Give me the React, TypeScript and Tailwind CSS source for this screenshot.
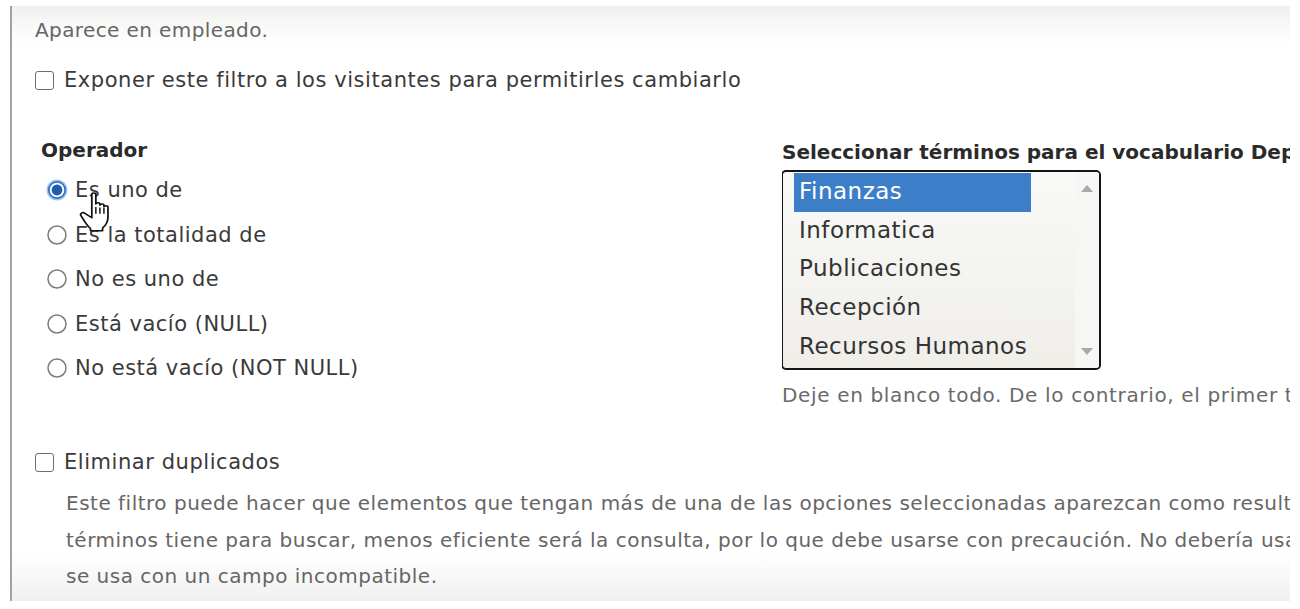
import type { ReactNode } from "react"

const font = { fontFamily: '"DejaVu Sans", Verdana, sans-serif' }

const operators = [
  "Es uno de",
  "Es la totalidad de",
  "No es uno de",
  "Está vacío (NULL)",
  "No está vacío (NOT NULL)",
]

const terms = ["Finanzas", "Informatica", "Publicaciones", "Recepción", "Recursos Humanos"]

const Checkbox = () => (
  <span className="inline-block h-[19px] w-[19px] shrink-0 rounded-[3px] border-[1.5px] border-[#6f6f6f] bg-white" />
)

const Radio = ({ checked }: { checked?: boolean }) =>
  checked ? (
    <svg width="22" height="22" viewBox="0 0 22 22" className="shrink-0">
      <circle cx="11" cy="11" r="10.5" fill="#9cc3ee" />
      <circle cx="11" cy="11" r="9" fill="#2f6fc0" />
      <circle cx="11" cy="11" r="7.3" fill="#fff" />
      <circle cx="11" cy="11" r="5.4" fill="#1f5cab" />
    </svg>
  ) : (
    <svg width="22" height="22" viewBox="0 0 22 22" className="shrink-0">
      <circle cx="11" cy="11" r="9" fill="#fff" stroke="#7c7c7c" strokeWidth="1.5" />
    </svg>
  )

const HandCursor = () => (
  <svg
    width="31"
    height="41"
    viewBox="0 1 23 36"
    preserveAspectRatio="none"
    className="pointer-events-none absolute left-[79px] top-[191px]"
  >
    <path
      d="M9.5 4C9.5 2.3 12.5 2.3 12.5 4L12.5 12.5C12.5 11 15.5 11 15.5 12.5L15.5 13.5C15.5 12 18.5 12 18.5 13.5L18.5 15C18.5 13.5 21.5 13.5 21.5 15L21.5 24C21.5 29 19.5 31.5 17.5 33.5L17.5 36L8.5 36L8.5 34C6.5 32 4.5 28.5 3 25.5L1.3 22.5C0.6 21 2.6 19.2 4.1 20.4L9.5 24.5Z"
      fill="#fff"
      stroke="#111"
      strokeWidth="1.3"
      strokeLinejoin="round"
    />
    <path d="M12.5 15V21M15.5 15.5V21M18.5 16V21" stroke="#111" strokeWidth="1.1" />
  </svg>
)

const Row = ({ children, className = "" }: { children: ReactNode; className?: string }) => (
  <div className={`flex items-center whitespace-nowrap ${className}`}>{children}</div>
)

export default function App() {
  return (
    <div className="relative h-[609px] w-[1300px] overflow-hidden bg-white" style={font}>
      <div className="ml-[10px] mt-[6px] h-[595px] w-[1280px] overflow-hidden border-l-2 border-[#a3a3a3] bg-[linear-gradient(to_bottom,#efefed_0px,#f7f7f6_16px,#fefefe_34px,#ffffff_40px,#ffffff_545px,#f7f7f7_575px,#efefef_100%)] pl-[23px]">
        <div className="pt-[12px] text-[20px] leading-[24px] tracking-[0.4px] text-[#666]">
          Aparece en empleado.
        </div>

        <Row className="mt-[26px] gap-[10px] text-[21px] leading-[24px] tracking-[0.55px] text-[#3a3a3a]">
          <Checkbox />
          <span>Exponer este filtro a los visitantes para permitirles cambiarlo</span>
        </Row>

        <div className="mt-[46px] flex">
          <div className="w-[747px] shrink-0 pl-[6px]">
            <div className="text-[20px] font-bold leading-[24px] text-[#2a2a2a]">Operador</div>
            <div className="mt-[17px] flex flex-col gap-[22.5px] pl-[5px]">
              {operators.map((op, i) => (
                <Row key={op} className="gap-[7px] text-[21px] leading-[22px] tracking-[0.5px] text-[#3a3a3a]">
                  <Radio checked={i === 0} />
                  <span>{op}</span>
                </Row>
              ))}
            </div>
          </div>

          <div className="flex-1 overflow-hidden pt-[2px]">
            <div className="whitespace-nowrap text-[20px] font-bold leading-[24px] text-[#2a2a2a]">
              Seleccionar términos para el vocabulario Departamentos
            </div>
            <div className="-ml-px mt-[6px] flex h-[200px] w-[320px] overflow-hidden rounded-[5px] border-2 border-[#151515] bg-[linear-gradient(to_bottom,#f9f9f8,#efeee9)]">
              <div className="flex-1 pl-[11px] pt-[1px]">
                {terms.map((t, i) => (
                  <div
                    key={t}
                    className={`h-[38.7px] w-[237px] whitespace-nowrap pl-[5px] text-[23px] leading-[36px] tracking-[0.5px] ${
                      i === 0 ? "bg-[#3d7ec8] text-white" : "text-[#333]"
                    }`}
                  >
                    {t}
                  </div>
                ))}
              </div>
              <div className="flex w-[24px] flex-col items-center justify-between bg-[#f6f6f4] py-[13px]">
                <svg width="12" height="7" viewBox="0 0 12 7">
                  <path d="M0 7L6 0L12 7Z" fill="#a9a9a9" />
                </svg>
                <svg width="12" height="7" viewBox="0 0 12 7">
                  <path d="M0 0L6 7L12 0Z" fill="#a9a9a9" />
                </svg>
              </div>
            </div>
            <div className="mt-[14px] whitespace-nowrap text-[20px] leading-[22px] tracking-[0.65px] text-[#6a6a6a]">
              Deje en blanco todo. De lo contrario, el primer término seleccionado será el predeterminado.
            </div>
          </div>
        </div>

        <Row className="mt-[44px] gap-[10px] text-[21px] leading-[24px] tracking-[0.55px] text-[#3a3a3a]">
          <Checkbox />
          <span>Eliminar duplicados</span>
        </Row>

        <div className="mt-[11px] whitespace-nowrap pl-[31px] text-[20px] leading-[36.5px] tracking-[0.5px] text-[#666]">
          <div>
            Este filtro puede hacer que elementos que tengan más de una de las opciones seleccionadas aparezcan como resultados duplicados.
          </div>
          <div>
            términos tiene para buscar, menos eficiente será la consulta, por lo que debe usarse con precaución. No debería usarse si el filtro
          </div>
          <div>se usa con un campo incompatible.</div>
        </div>
      </div>
      <HandCursor />
    </div>
  )
}
